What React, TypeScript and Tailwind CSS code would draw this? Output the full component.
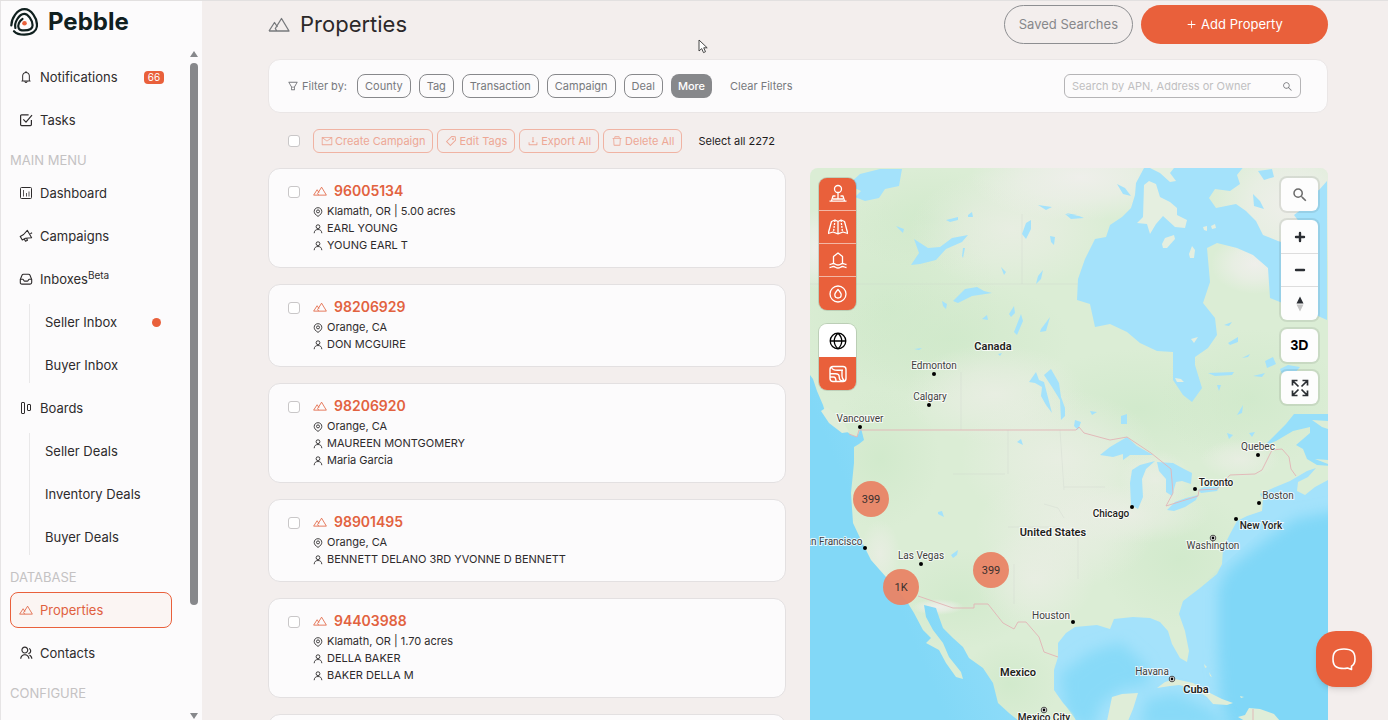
import type { ComponentType, ReactNode } from "react";
import {
  AiOutlineBell,
  AiOutlineDelete,
  AiOutlineDownload,
  AiOutlineFilter,
  AiOutlineMail,
  AiOutlinePlus,
  AiOutlineSearch,
  AiOutlineTag
} from "react-icons/ai";
import { MdSearch } from "react-icons/md";
import { RiGroupLine } from "react-icons/ri";

type IconProps = { className?: string };

const filters = ["County", "Tag", "Transaction", "Campaign", "Deal"];

const bulkActions = [
  { label: "Create Campaign", icon: AiOutlineMail },
  { label: "Edit Tags", icon: AiOutlineTag },
  { label: "Export All", icon: AiOutlineDownload },
  { label: "Delete All", icon: AiOutlineDelete }
];

const properties = [
  { apn: "96005134", place: "Klamath, OR | 5.00 acres", owners: ["EARL YOUNG", "YOUNG EARL T"] },
  { apn: "98206929", place: "Orange, CA", owners: ["DON MCGUIRE"] },
  { apn: "98206920", place: "Orange, CA", owners: ["MAUREEN MONTGOMERY", "Maria Garcia"] },
  { apn: "98901495", place: "Orange, CA", owners: ["BENNETT DELANO 3RD YVONNE D BENNETT"] },
  { apn: "94403988", place: "Klamath, OR | 1.70 acres", owners: ["DELLA BAKER", "BAKER DELLA M"] }
];

function MountainIcon({ className }: IconProps) {
  return (
    <svg viewBox="0 0 22 15" fill="none" stroke="currentColor" strokeWidth="1.3" strokeLinejoin="round" className={className}>
      <path d="M1 14 6.5 5.5 9.5 10M1 14h20L13.5 1.5 7.3 11.5 8.8 14" />
    </svg>
  );
}

function TasksIcon({ className }: IconProps) {
  return (
    <svg viewBox="0 0 14 14" fill="none" stroke="currentColor" strokeWidth="1.2" className={className}>
      <path d="M12.4 7v4.6a1 1 0 0 1-1 1H2.6a1 1 0 0 1-1-1V2.8a1 1 0 0 1 1-1h7" />
      <path d="m4.3 6.4 2.7 2.8 6-7" />
    </svg>
  );
}

function DashboardIcon({ className }: IconProps) {
  return (
    <svg viewBox="0 0 14 14" fill="none" stroke="currentColor" className={className}>
      <rect x="1.5" y="1.5" width="11" height="11" rx="1" />
      <path d="M4.5 4v6.5M7.5 7v3.5M10 5.500v5" strokeOpacity=".8" />
    </svg>
  );
}

function CampaignsIcon({ className }: IconProps) {
  return (
    <svg viewBox="0 0 14 14" fill="none" stroke="currentColor" strokeWidth="1.1" strokeLinejoin="round" className={className}>
      <path d="M8.300 1.300 12.600 8.800 6.500 9.200 3.300 11 1.200 7.400 4.600 5.500z" />
      <path d="m5.300 10 1.200 2.300 2-1-1-2M11.300 4.800l1.800-1" />
    </svg>
  );
}

function InboxIcon({ className }: IconProps) {
  return (
    <svg viewBox="0 0 14 14" fill="none" stroke="currentColor" strokeWidth="1.1" className={className}>
      <path d="M1.3 7.500 3 3.300c.3-.7.8-1 1.500-1h5c.7 0 1.200.3 1.500 1l1.700 4.200v3c0 1-.6 1.600-1.600 1.600H2.900c-1 0-1.600-.6-1.600-1.600z" />
      <path d="M1.300 7.200h2.500c.7 0 .8 1.900 1.700 1.900h3c.9 0 1-1.900 1.700-1.900h2.500" />
    </svg>
  );
}

function BoardsIcon({ className }: IconProps) {
  return (
    <svg viewBox="0 0 14 14" fill="none" stroke="currentColor" className={className}>
      <rect x="2.500" y="1.500" width="3" height="11" rx=".5" />
      <rect x="8.500" y="3.500" width="3" height="6" rx=".5" />
    </svg>
  );
}

function PinIcon({ className }: IconProps) {
  return (
    <svg viewBox="0 0 10 10" fill="none" stroke="currentColor" strokeWidth=".9" className={className}>
      <path d="M5 9.400C2.500 7.800 1.200 6.200 1.200 4.500 1.200 2.200 2.800.7 5 .7s3.800 1.500 3.800 3.800c0 1.700-1.300 3.300-3.800 4.900z" />
      <circle cx="5" cy="4.400" r="1.500" />
    </svg>
  );
}

function PersonIcon({ className }: IconProps) {
  return (
    <svg viewBox="0 0 10 10" fill="none" stroke="currentColor" strokeWidth=".9" className={className}>
      <circle cx="5" cy="2.700" r="1.900" />
      <path d="M1.200 9.200C1.200 6.800 2.700 5.500 5 5.500s3.800 1.300 3.800 3.700" />
    </svg>
  );
}

function PebbleMark() {
  return (
    <svg viewBox="0 0 28 28" fill="none" stroke="#10201f" strokeWidth="2.200" strokeLinecap="round" className="size-7">
      <path d="M1.300 17.500C1.500 10.500 7 1.200 14.500 1.200c7 0 12.500 9 12.500 15.800 0 6.300-5 9.700-12.800 9.700-4.800 0-8-1.200-10.200-3.500" />
      <path d="M5.400 20C4 14.500 9 6.200 14.200 5.900c3.700-.2 8.400 6.600 8.400 11.300 0 3.900-3.600 5.200-8.600 5.200-3 0-4.700-.8-5.300-2.200-1.300-2.700.6-7.700 3.800-9.300" />
      <circle cx="14.500" cy="15.200" r="2.300" fill="#e9603b" stroke="none" />
    </svg>
  );
}

function NavLink({
  label,
  icon: Icon,
  active,
  sup,
  children
}: {
  label: string;
  icon?: ComponentType<IconProps>;
  active?: boolean;
  sup?: string;
  children?: ReactNode;
}) {
  return (
    <li>
      <a
        href="#"
        className={
          active
            ? "flex h-9 items-center gap-[7px] rounded-lg border border-[#e9603b] bg-[#fbf5f3] pl-2 text-[#e0603f]"
            : Icon
              ? "flex h-9 items-center gap-[7px] border border-transparent pl-2"
              : "flex h-9 items-center pl-[15px]"
        }
      >
        {Icon && <Icon className="size-[14px] shrink-0" />}
        <span>
          {label}
          {sup && <sup className="text-[10px] leading-none">{sup}</sup>}
        </span>
        {children}
      </a>
    </li>
  );
}

function NavSection({ title }: { title: string }) {
  return <li className="h-[23px] pt-2 text-[13px] leading-[15px] text-[#c4c2c3]">{title}</li>;
}

function Sidebar() {
  return (
    <aside className="flex w-[202px] shrink-0 flex-col overflow-hidden border-l border-[#e6e4e5] bg-[#fcfbfc]">
      <a href="#" className="flex h-[46px] shrink-0 items-center gap-[10px] pb-1 pl-[9px] text-[24px] font-bold text-[#10201f]">
        <PebbleMark />
        Pebble
      </a>
      <div className="flex min-h-0 flex-1">
        <nav className="w-[171px] shrink-0 overflow-hidden pt-3 pl-[9px] text-[13px] leading-5 text-[#2e2b2c]">
          <ul className="flex flex-col gap-[7px]">
            <NavLink label="Notifications" icon={AiOutlineBell}>
              <span className="mr-[7px] ml-auto flex h-[13px] w-5 items-center justify-center rounded bg-[#e9603b] text-[10px] leading-none text-white">
                66
              </span>
            </NavLink>
            <NavLink label="Tasks" icon={TasksIcon} />
            <NavSection title="MAIN MENU" />
            <NavLink label="Dashboard" icon={DashboardIcon} />
            <NavLink label="Campaigns" icon={CampaignsIcon} />
            <NavLink label="Inboxes" icon={InboxIcon} sup="Beta" />
            <li>
              <ul className="ml-[19px] flex flex-col gap-[7px] border-l border-[#e9e8e9]">
                <NavLink label="Seller Inbox">
                  <span className="mr-[11px] ml-auto size-[9px] rounded-full bg-[#e9603b]" />
                </NavLink>
                <NavLink label="Buyer Inbox" />
              </ul>
            </li>
            <NavLink label="Boards" icon={BoardsIcon} />
            <li>
              <ul className="ml-[19px] flex flex-col gap-[7px] border-l border-[#e9e8e9]">
                <NavLink label="Seller Deals" />
                <NavLink label="Inventory Deals" />
                <NavLink label="Buyer Deals" />
              </ul>
            </li>
            <NavSection title="DATABASE" />
            <NavLink label="Properties" icon={MountainIcon} active />
            <NavLink label="Contacts" icon={RiGroupLine} />
            <NavSection title="CONFIGURE" />
          </ul>
        </nav>
        {/* scroll rail */}
        <div className="mr-1 ml-auto flex w-2 flex-col items-center justify-between pt-1 pb-px text-[#87888b]">
          <svg viewBox="0 0 8 6" fill="currentColor" className="h-[6px] w-2">
            <path d="M4 0 8 6H0z" />
          </svg>
          <div className="mt-[6px] flex w-2 flex-1 flex-col">
            <div className="h-5/6 rounded-full bg-[#87888b]" />
          </div>
          <svg viewBox="0 0 8 6" fill="currentColor" className="h-[6px] w-2">
            <path d="M0 0h8L4 6z" />
          </svg>
        </div>
      </div>
    </aside>
  );
}

function PropertyCard({ apn, place, owners }: (typeof properties)[number]) {
  return (
    <li className="flex rounded-xl border border-[#e3e0e1] bg-[#fcfbfc] pt-3 pb-[13px] pl-[19px]">
      <input
        type="checkbox"
        aria-label={"Select " + apn}
        className="mt-[5px] size-3 shrink-0 appearance-none rounded-[3px] border border-[#c9c7c8] bg-white"
      />
      <div className="ml-[13px] min-w-0 text-[11px] leading-[17px] text-[#2e2b2c]">
        <a href="#" className="flex items-center gap-[7px] text-[14px] leading-5 font-semibold text-[#e2623f]">
          <MountainIcon className="h-[10px] w-[14px]" />
          {apn}
        </a>
        <p className="mt-[2px] flex items-center gap-1">
          <PinIcon className="size-[10px]" />
          {place}
        </p>
        {owners.map((owner) => (
          <p key={owner} className="flex items-center gap-1">
            <PersonIcon className="size-[10px]" />
            {owner}
          </p>
        ))}
      </div>
    </li>
  );
}

const lakes = [
  "M38 16l12-11 20-5h22l-3 17-14 3-6 9-14 3-10-4 6-6z",
  "M101 96l8-12-5-14 14 9 12-1 12-9 16-3-6 7-16 7-10 11-16 4z",
  "M143 132l12-12 12-2 7 4 8 2-20 3-14 7z",
  "M132 132l5 3-1 5-3-3zM153 89l2-10-2 0-1 8zM136 51l12-3 0 3-8 2zM158 46l4-3 1 5-5 0z",
  "M86 57l8 3-1 4zM212 65l4-11 5-3 0 9-5 10zM240 67l5 1-1 8-3-3zM228 36l14 2-6 3zM256 44l11 2-5 1z",
  "M199 145l5-8 1 7-4 4zM204 163l7-18 2 7-6 14zM191 98l5 5-2 3zM228 107l5-6-2 9-5 5zM231 160l9-12-4 14-6 1z",
  "M172 150l5-4 1 5zM104 180l8-1-3 2zM188 185l4-1-2 3z",
  "M219 213l7-10 3 8 5 2 8 31-6-8-5-9 1-9-7-4zM234 206l7-6 8 14 2 14 4 11 0 8-4 4-1-20-8-13z",
  "M290 286l10-8 17-10 10 9 16 9-23 0-7 5 0-6-10 3z",
  "M322 301l8-5 15-4-9 8-4 10 1 18-5 12-7-4-1-22z",
  "M347 293l16 1 11 6 8 4-1 11-9-3-6 1-4 14-6-4 0-13-7-8z",
  "M357 341l8-8 11-4 12-3-2 5-11 7-11 4z",
  "M388 321l6-3 16-1-3 5-16 2z",
  "M128 343l4-1 2 6-6-3zM141 386l7-5-1 5-4 3zM207 273l4-3 2 6zM265 251l6 2-3 8-4-4zM311 247l6-2 0 10-6 0z",
  "M280 242l7 1-5 3zM255 45l14 2 5 2-13 1z",
  "M398 204l26-1-2 3-17 1zM407 216l4 0-2 6zM418 174l10-6 0 5-8 3zM427 246l6-10-1 8zM432 189l8-4-2 3zM443 207l12-3-3 4zM455 192l8-4 3 7-9 4zM470 200l8-4 12 2-6 7-12 0zM414 156l8-3-3 4z",
  "M307 15l8 4 6 8-8-2zM443 25l7 7 4 8-10-3zM448 2l14-2 2 8-10 3zM417 264l6 2-4 4zM439 264l6-1-3 5z"
];

const cities = [
  { name: "Edmonton", x: 124, y: 200, dot: [124, 205] },
  { name: "Calgary", x: 120, y: 231, dot: [119, 236] },
  { name: "Vancouver", x: 50, y: 253, dot: [50, 258] },
  { name: "San Francisco", x: 21, y: 376, dot: [55, 379] },
  { name: "Las Vegas", x: 111, y: 390, dot: [111, 395] },
  { name: "Houston", x: 241, y: 450, dot: [263, 453] },
  { name: "Quebec", x: 448, y: 281, dot: [448, 286] },
  { name: "Boston", x: 468, y: 330, dot: [449, 334] }
];

const bigCities = [
  { name: "Toronto", x: 406, y: 317, dot: [385, 320] },
  { name: "Chicago", x: 301, y: 348, dot: [322, 338] },
  { name: "New York", x: 451, y: 360, dot: [426, 350] }
];

const capitals = [
  { name: "Washington", x: 403, y: 380, dot: [403, 369], bold: false },
  { name: "Havana", x: 342, y: 506, dot: [362, 510], bold: false },
  { name: "Mexico City", x: 234, y: 552, dot: [234, 541], bold: true }
];

const countries = [
  { name: "Canada", x: 183, y: 181 },
  { name: "United States", x: 243, y: 367 },
  { name: "Mexico", x: 208, y: 507 },
  { name: "Cuba", x: 386, y: 524 }
];

const clusters = [
  { count: "399", x: 61, y: 330 },
  { count: "1K", x: 91, y: 418 },
  { count: "399", x: 181, y: 401 }
];

function MapCanvas() {
  return (
    <svg viewBox="0 -1 518 552" preserveAspectRatio="xMidYMid slice" className="block size-full font-['Roboto',sans-serif]">
      <defs>
        <radialGradient id="pale">
          <stop offset="0" stopColor="#ebeee5" stopOpacity=".8" />
          <stop offset=".5" stopColor="#eaeee4" stopOpacity=".5" />
          <stop offset="1" stopColor="#eaeee4" stopOpacity="0" />
        </radialGradient>
        <radialGradient id="tundra">
          <stop offset="0" stopColor="#f1efed" stopOpacity=".9" />
          <stop offset=".5" stopColor="#f0efec" stopOpacity=".6" />
          <stop offset="1" stopColor="#f0efec" stopOpacity="0" />
        </radialGradient>
        <radialGradient id="forest">
          <stop offset="0" stopColor="#cfe9ca" stopOpacity=".8" />
          <stop offset="1" stopColor="#d0e8ca" stopOpacity="0" />
        </radialGradient>
        <linearGradient id="pacific" x1="1" y1="0" x2=".3" y2=".5">
          <stop offset="0" stopColor="#a4e2fb" />
          <stop offset="1" stopColor="#82d8f7" />
        </linearGradient>
        <filter id="shelf" x="-20%" y="-20%" width="140%" height="140%">
          <feGaussianBlur stdDeviation="7" />
        </filter>
        <clipPath id="atlantic">
          <path d="M375 551V430L520 300V551Z" />
        </clipPath>
        <clipPath id="gulf">
          <path d="M266 551 244 521V492L262 460H345L362 490 390 510 440 540V551Z" />
        </clipPath>
      </defs>

      <rect y="-1" width="518" height="553" fill="#dbedd5" />
      <g fill="url(#forest)">
        <ellipse cx="80" cy="140" rx="110" ry="110" />
        <ellipse cx="140" cy="170" rx="120" ry="60" />
        <ellipse cx="70" cy="290" rx="60" ry="70" />
        <ellipse cx="330" cy="240" rx="120" ry="60" />
        <ellipse cx="440" cy="230" rx="90" ry="70" />
        <ellipse cx="150" cy="430" rx="70" ry="50" />
        <ellipse cx="200" cy="515" rx="50" ry="45" />
        <ellipse cx="370" cy="390" rx="80" ry="70" />
        <ellipse cx="120" cy="50" rx="90" ry="50" />
      </g>
      <g fill="url(#pale)">
        <ellipse cx="200" cy="60" rx="100" ry="60" />
        <ellipse cx="185" cy="225" rx="90" ry="50" />
        <ellipse cx="250" cy="290" rx="100" ry="70" />
        <ellipse cx="255" cy="360" rx="90" ry="60" />
        <ellipse cx="320" cy="345" rx="80" ry="30" />
        <ellipse cx="225" cy="410" rx="60" ry="50" />
        <ellipse cx="70" cy="385" rx="20" ry="34" />
        <ellipse cx="345" cy="310" rx="36" ry="30" />
        <ellipse cx="430" cy="290" rx="40" ry="20" />
      </g>
      <g fill="url(#tundra)">
        <ellipse cx="270" cy="8" rx="110" ry="44" />
        <ellipse cx="5" cy="80" rx="20" ry="40" />
        <ellipse cx="128" cy="438" rx="26" ry="8" />
        <ellipse cx="445" cy="95" rx="44" ry="30" />
        <ellipse cx="480" cy="35" rx="80" ry="70" />
        <ellipse cx="350" cy="40" rx="30" ry="24" />
      </g>

      {/* state and province lines */}
      <g stroke="#c9cfc8" strokeOpacity=".6" fill="none" strokeWidth=".5">
        <path d="M0 115H268M212 45V115M151 203V261M198 261V305M143 305H195M250 261l4 60M254 318H295M234 335l14 4 6 10M198 358H250M268 360v50M204 395v40" />
      </g>

      {/* Hudson Bay and the Labrador Sea */}
      <path
        fill="#a4e2fb"
        d="M334-1 326 14l-1 12-4 13-9 9-12 8-4 12-11 2-10 20-7 20-1 21 13 4 5 23 15-3 17 8 13 11 17 8 16 1v28l10 15 9 7 10-14-7-23v-8l13-9 9-13-2-17-12-15 7-21-3-34 10-5 20 5 16 7 15 13 2 30 30 12 18 6 9 4V12l-8 9-11 5-2 11-12 9 6 8-9 8v14l-13-4-15-6-7-14-10-10-10-7-20 4-7-10 6-9 15 2 10-7-3-9 8-10z"
      />
      <g fill="#e5efe0">
        <path d="m334 16 5-4 7 3 4 13 10 5 7 6 0 7 10 5-2 8-10-1-12-11-7 8-6 10-3-10-10-1 6-6zM340-1h24l-4 5 6 8-6 1-10-9zM352 75l3-6 9-3 1 4-8 9-4 0zM379 85l3-8 3 4-1 8-4 0zM393 58l4-1 0 5-3-1zM401 57l4-2 1 4-4 1zM365 209l6 1 3 3-7 0zM381 170l7-2-4 6z" />
      </g>

      {/* Gulf of St Lawrence */}
      <path fill="#97dffa" d="M518 245h-34l-8 10-14 14-8 8 12-5 17-10 17-4v6l-14 12 7 4 4 10 10 6 13 1z" />
      <path fill="#dcedd7" d="m502 251 16 1v8l-6-2zM505 290l13 1v4z" />

      {/* Pacific */}
      <path
        fill="url(#pacific)"
        d="M0 206l3 4 4 12 6 14 3 10 14 11 11 9 6 2 4-9 3 12-5 4-5 3 0 16-3 30 2 30 8 17 10 20 15 17 20 23 8 13 9 17 8 8-5 5 13 7 7 13 10 14 7 2-2-7-12-15-6-14-10-13-7-13-2-12 12 3 3 9 4 11 10 10 10 9 6 11 14 10 10 15 5 20 11 10 10 8H0z"
      />
      <path fill="#dfedd8" d="m11 242 6-4 15 13 7 12-7 1-13-10z" />

      {/* Gulf of Mexico and the Atlantic */}
      <path
        fill="#a4e2fb"
        d="M266 552l-3-8-10-10-9-13v-20l4-13v-14l8-10 9-6 22-2 13 4 4-10 19-2 17 1 10 4 8 9 4 13 8 14 7 4 2-11-4-20-6-17 4-13 17-13 17-14 5-10 1-16 7-14 7-13 10-5 15-5 1-12-3-5 13-6 17-7 17-10 9-3-8 9-10 5-1 9 8 4 10-8 15-8v251z"
      />
      <g clipPath="url(#atlantic)">
        <path filter="url(#shelf)" fill="#80d7f7" d="M450 375l35-25 50-10v230H420l-10-40-2-50 0-60 10-20z" />
      </g>
      <g clipPath="url(#gulf)">
        <path filter="url(#shelf)" fill="#88daf8" d="M250 505l30-22 30-10 25 22 6 20-30 5-20 15-10 30-25-20zM330 560l6-30 30-6 30 14 30 22z" />
      </g>
      <g fill="#dfedd8">
        <path d="m297 552 5-24 10-3 16-1-5 16-5 12zM347 519l8-6 10-3 18 4 17 10 12 6 11 4-6 2-14-1-6-7-12-8-16-4-9 1zM428 548l7-2 4-7 11 1 14 5 6 7h-35zM394 495l3 3-2 1zM399 503l3 5-2-1zM430 527l4 1-3 1z" />
      </g>

      <g fill="#a4e2fb">
        {lakes.map((d) => (
          <path key={d} d={d} />
        ))}
      </g>

      {/* national borders */}
      <g fill="none" stroke="#e2b3b5" strokeWidth=".9">
        <path d="M39 265l8 3 2-7h217l3-3 5 6 26 7 17-3 24 16 20 16 2 24-7 13 32-10 1-6 18-1 13-14 25-1 7-4 10-20 10-1 7 8 2 12 5 7M108 427l35 12h21v-4h14l15 19 11 6 4-7h8l13 15 5 15 14 5M443 540v12" />
      </g>

      <g className="fill-[#3f3e40] text-[10px]" textAnchor="middle" stroke="#fff" strokeOpacity=".75" strokeWidth="2" paintOrder="stroke">
        {cities.map((city) => (
          <text key={city.name} x={city.x} y={city.y}>
            {city.name}
          </text>
        ))}
        {capitals.map((city) => (
          <text key={city.name} x={city.x} y={city.y} className={city.bold ? "fill-[#1f1e20] font-medium" : ""}>
            {city.name}
          </text>
        ))}
      </g>
      <g className="fill-[#1f1e20] font-medium" textAnchor="middle" stroke="#fff" strokeOpacity=".75" strokeWidth="2" paintOrder="stroke">
        {bigCities.map((city) => (
          <text key={city.name} x={city.x} y={city.y} className="text-[10px]">
            {city.name}
          </text>
        ))}
        {countries.map((country) => (
          <text key={country.name} x={country.x} y={country.y} className="text-[11px] font-semibold">
            {country.name}
          </text>
        ))}
      </g>
      {[...cities, ...bigCities].map((city) => (
        <circle key={city.name} cx={city.dot[0]} cy={city.dot[1]} r="2" />
      ))}
      {capitals.map((city) => (
        <g key={city.name}>
          <circle cx={city.dot[0]} cy={city.dot[1]} r="2.800" fill="#fff" stroke="#222" strokeWidth=".8" />
          <circle cx={city.dot[0]} cy={city.dot[1]} r="1.400" />
        </g>
      ))}

      {clusters.map((cluster) => (
        <g key={cluster.x}>
          <circle cx={cluster.x} cy={cluster.y} r="18" fill="#e98465" fillOpacity=".95" />
          <text x={cluster.x} y={cluster.y + 4} textAnchor="middle" className="fill-[#3a2f2d] text-[11px]">
            {cluster.count}
          </text>
        </g>
      ))}
    </svg>
  );
}

const layerIcons = [
  {
    name: "Parcels",
    art: (
      <>
        <circle cx="10" cy="5" r="3.500" />
        <path d="M10 8.500v6.500M7.500 12H5l-1.500 5M12.500 12H15l1.500 5M1.500 17.200h17M5 15h10" />
      </>
    )
  },
  {
    name: "Topography",
    art: (
      <>
        <path d="M3.500 4.500C2.500 8 1.500 12 .2 16.500L5 15l5 1.800L15 15l4.800 1.500C18.500 12 17.500 8 16.500 4.500L13 3l-3 1.500L7 3zM10 4.500v12" />
        <path d="M7 3 5.500 15M13 3l1.500 12" strokeDasharray="2 1" />
      </>
    )
  },
  {
    name: "Flood zones",
    art: (
      <path d="M5.500 13.500v-7L10 3l4.500 3.500v7M1.500 14.500c2 0 2-1 4-1s2 1.500 4.500 1.500 2.500-1.500 4.500-1.500 2 1 4 1M1.500 17.500c2 0 2-1 4-1s2 1.500 4.500 1.500 2.500-1.500 4.500-1.500 2 1 4 1" />
    )
  },
  {
    name: "Water",
    art: (
      <>
        <circle cx="10" cy="10" r="8" />
        <path d="M10 5.500c2 2.200 3.200 3.800 3.200 5.300a3.200 3.200 0 0 1-6.400 0c0-1.500 1.200-3.100 3.200-5.300z" />
      </>
    )
  }
];

function MapControls() {
  return (
    <>
      <div className="absolute top-[10px] left-[9px] flex w-[37px] flex-col gap-[14px] text-white">
        <div className="flex flex-col divide-y divide-[#f3b7a5] overflow-hidden rounded-lg bg-[#e9603b] shadow-[0_0_0_1px_rgba(0,0,0,0.12)]">
          {layerIcons.map((layer) => (
            <button key={layer.name} type="button" aria-label={layer.name} className="flex h-[33px] items-center justify-center">
              <svg viewBox="0 0 20 20" fill="none" stroke="currentColor" strokeWidth="1.300" strokeLinejoin="round" className="size-5">
                {layer.art}
              </svg>
            </button>
          ))}
        </div>
        <div className="flex flex-col overflow-hidden rounded-lg shadow-[0_0_0_1px_rgba(0,0,0,0.12)]">
          <button type="button" aria-label="Street map" className="flex h-[33px] items-center justify-center bg-white text-black">
            <svg viewBox="0 0 20 20" fill="none" stroke="currentColor" strokeWidth="1.300" className="size-5">
              <circle cx="10" cy="10" r="7.800" />
              <path d="M2 10h16M10 2.200c-5 4.500-5 11 0 15.600M10 2.200c5 4.500 5 11 0 15.600" />
            </svg>
          </button>
          <button type="button" aria-label="Satellite map" className="flex h-[33px] items-center justify-center bg-[#e9603b]">
            <svg viewBox="0 0 20 20" fill="none" stroke="currentColor" strokeWidth="1.400" className="size-5">
              <rect x="2" y="2.500" width="16" height="15" rx="3" />
              <path d="M3.500 3c.5 3 3.500 3.300 6 3.300h5.500M2 9.800h5.500c3 0 3.700 1 3.700 3 0 2.500 1.300 4.200 3.800 4.200h1M2 13h3.500c2 0 2.500 1.500 2.500 4.500M14 6.300v6c0 2 1 3 2.500 4.700" />
            </svg>
          </button>
        </div>
      </div>

      <div className="absolute top-[10px] right-[10px] flex w-[37px] flex-col gap-[9px] text-[#2b2e33] *:rounded-md *:bg-[#fdfdfd] *:shadow-[0_0_0_2px_rgba(0,0,0,0.08)]">
        <button type="button" aria-label="Search map" className="flex h-[33px] items-center justify-center">
          <MdSearch className="size-[18px] text-[#6b6b6b]" />
        </button>
        <div className="flex flex-col divide-y divide-[#dddddd]">
          <button type="button" aria-label="Zoom in" className="flex h-[34px] items-center justify-center">
            <svg viewBox="0 0 12 12" stroke="currentColor" strokeWidth="2.400" strokeLinecap="round" className="size-3">
              <path d="M6 2v8M2 6h8" />
            </svg>
          </button>
          <button type="button" aria-label="Zoom out" className="flex h-[33px] items-center justify-center">
            <svg viewBox="0 0 12 12" stroke="currentColor" strokeWidth="2.400" strokeLinecap="round" className="size-3">
              <path d="M2 6h8" />
            </svg>
          </button>
          <button type="button" aria-label="Reset north" className="flex h-[33px] items-center justify-center">
            <svg viewBox="0 0 8 16" className="h-4 w-2">
              <path d="M4 .5 7.500 7.500h-7z" fill="#2b2e33" />
              <path d="M4 15.500.5 8.500h7z" fill="#c4c4c4" />
            </svg>
          </button>
        </div>
        <button type="button" className="h-[33px] font-['Liberation_Sans',sans-serif] text-[14px] font-bold text-black">
          3D
        </button>
        <button type="button" aria-label="Full screen" className="flex h-[33px] items-center justify-center">
          <svg viewBox="0 0 18 18" fill="none" stroke="currentColor" strokeWidth="1.700" className="size-[18px]">
            <path d="M1.500 6.500v-5h5M1.500 1.500l6 6M11.500 1.500h5v5M16.500 1.500l-6 6M1.500 11.500v5h5M1.500 16.500l6-6M11.500 16.500h5v-5M16.500 16.500l-6-6" />
          </svg>
        </button>
      </div>
    </>
  );
}

export default function App() {
  return (
    <div className="flex h-screen overflow-hidden border-t border-[#e2e0e0] bg-[#f3eeed] font-['Inter',sans-serif]">
      <Sidebar />

      <main className="flex min-w-0 flex-1 flex-col pt-1 pr-[60px] pl-[66px]">
        <header className="flex shrink-0 items-center">
          <MountainIcon className="h-[15px] w-[22px] text-[#77797c]" />
          <h1 className="ml-[10px] text-[22px] text-[#2b2829]">Properties</h1>
          <button type="button" className="ml-auto h-[39px] rounded-full border border-[#8d8e91] px-[14px] text-[13px] text-[#87888b]">
            Saved Searches
          </button>
          <button
            type="button"
            className="ml-2 flex h-[39px] w-[187px] items-center justify-center gap-1 rounded-full bg-[#e9603b] text-[13px] text-white"
          >
            <AiOutlinePlus className="size-[11px]" />
            Add Property
          </button>
        </header>

        <section className="mt-[15px] flex h-[54px] shrink-0 items-center rounded-xl border border-[#eae6e6] bg-[#fcfbfc] pr-[26px] pl-[18px] text-[11px] text-[#77797d]">
          <span className="flex items-center gap-[3px]">
            <AiOutlineFilter className="size-3" />
            Filter by:
          </span>
          <div className="ml-[10px] flex gap-2">
            {filters.map((filter) => (
              <button key={filter} type="button" className="h-6 rounded-lg border border-[#87888b] px-[7px]">
                {filter}
              </button>
            ))}
            <button type="button" className="h-6 rounded-lg bg-[#87888b] px-[7px] font-medium text-white">
              More
            </button>
          </div>
          <button type="button" className="ml-[18px]">
            Clear Filters
          </button>
          <label className="ml-auto flex h-6 w-[237px] items-center rounded-md border border-[#b5b4b6] px-[7px]">
            <input
              type="text"
              aria-label="Search properties"
              placeholder="Search by APN, Address or Owner"
              className="min-w-0 flex-1 outline-none placeholder:text-[#c0bfc1]"
            />
            <AiOutlineSearch className="size-[11px]" />
          </label>
        </section>

        <div className="mt-4 flex h-6 shrink-0 items-center gap-1 pl-5 text-[11px]">
          <input
            type="checkbox"
            aria-label="Select page"
            className="mr-[9px] size-3 appearance-none rounded-[3px] border border-[#c9c7c8] bg-white"
          />
          {bulkActions.map(({ label, icon: Icon }) => (
            <button
              key={label}
              type="button"
              className="flex h-6 items-center gap-[2px] rounded-md border border-[#f0b3a3] px-[7px] text-[#eda795]"
            >
              <Icon className="size-3" />
              {label}
            </button>
          ))}
          <button type="button" className="ml-3 text-[#1d1b1c]">
            Select all 2272
          </button>
        </div>

        <div className="mt-[15px] grid min-h-0 flex-1 grid-cols-2 gap-6">
          <ul className="flex min-h-0 flex-col gap-4 overflow-hidden *:shrink-0">
            {properties.map((property) => (
              <PropertyCard key={property.apn} {...property} />
            ))}
            <li aria-hidden="true" className="h-20 rounded-xl border border-[#e3e0e1] bg-[#fcfbfc]" />
          </ul>
          <section aria-label="Map" className="relative min-h-0 overflow-hidden rounded-t-lg">
            <MapCanvas />
            <MapControls />
          </section>
        </div>
      </main>

      {/* chat launcher */}
      <button
        type="button"
        aria-label="Open chat"
        className="fixed right-4 bottom-[33px] flex size-14 items-center justify-center rounded-[20px] bg-[#e9603b] text-white shadow-md"
      >
        <svg viewBox="0 0 24 24" fill="none" stroke="currentColor" strokeWidth="1.600" strokeLinejoin="round" className="size-6">
          <path d="M19.500 22.500v-3.300c2.600-1.600 3.500-3.400 3.500-7C23 5 20 2 12 2S1 5 1 12s3 9.500 11 9.500c1.500 0 2.500-.2 3.500-.5z" />
        </svg>
      </button>

      {/* pointer */}
      <svg viewBox="0 0 10 15" className="pointer-events-none fixed top-[39px] left-[698px] h-[15px] w-[10px]">
        <path d="M1 1v11l2.700-2.400 1.800 4 2-.9-1.800-3.900h3.500z" fill="#fff" stroke="#333" strokeWidth=".9" />
      </svg>
    </div>
  );
}
